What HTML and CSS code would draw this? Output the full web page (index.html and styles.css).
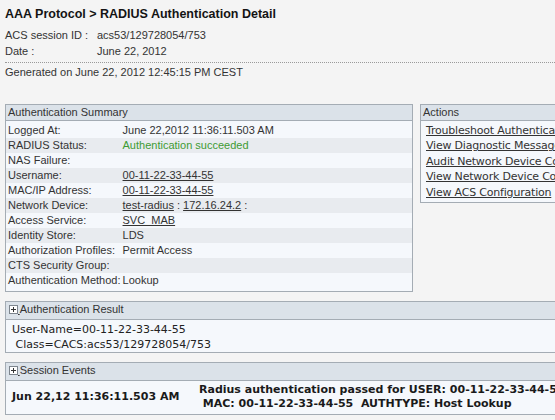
FILE: index.html
```html
<!DOCTYPE html>
<html lang="en">
<head>
    <meta charset="UTF-8" />
    <title>RADIUS Authentication Detail</title>
    <link rel="stylesheet" href="styles.css">
</head>
<body>
<div class="page">
    <h1 class="title">AAA Protocol &gt; RADIUS Authentication Detail</h1>
    <div class="meta">
        <div class="meta-row"><span class="meta-key">ACS session ID :</span><span>acs53/129728054/753</span></div>
        <div class="meta-row"><span class="meta-key">Date :</span><span>June 22, 2012</span></div>
    </div>
    <div class="generated">Generated on June 22, 2012 12:45:15 PM CEST</div>

    <div class="panels">
        <div class="box summary">
            <div class="box-head">Authentication Summary</div>
            <div class="box-body">
                <table class="summary-table">
                    <tr><td class="key">Logged At:</td><td>June 22,2012 11:36:11.503 AM</td></tr>
                    <tr><td class="key">RADIUS Status:</td><td class="ok">Authentication succeeded</td></tr>
                    <tr><td class="key">NAS Failure:</td><td></td></tr>
                    <tr><td class="key">Username:</td><td><a href="#">00-11-22-33-44-55</a></td></tr>
                    <tr><td class="key">MAC/IP Address:</td><td><a href="#">00-11-22-33-44-55</a></td></tr>
                    <tr><td class="key">Network Device:</td><td><a href="#">test-radius</a> : <a href="#">172.16.24.2</a> :</td></tr>
                    <tr><td class="key">Access Service:</td><td><a href="#">SVC_MAB</a></td></tr>
                    <tr><td class="key">Identity Store:</td><td>LDS</td></tr>
                    <tr><td class="key">Authorization Profiles:</td><td>Permit Access</td></tr>
                    <tr><td class="key">CTS Security Group:</td><td></td></tr>
                    <tr><td class="key">Authentication Method:</td><td>Lookup</td></tr>
                </table>
            </div>
        </div>

        <div class="box actions">
            <div class="box-head">Actions</div>
            <div class="box-body">
                <a href="#" class="action">Troubleshoot Authentication</a>
                <a href="#" class="action">View Diagnostic Messages</a>
                <a href="#" class="action">Audit Network Device Configuration</a>
                <a href="#" class="action">View Network Device Configuration</a>
                <a href="#" class="action">View ACS Configuration</a>
            </div>
        </div>
    </div>

    <div class="box wide">
        <div class="box-head">
            <svg class="toggle" width="9" height="9" viewBox="0 0 9 9"><rect x="0.5" y="0.5" width="8" height="8" fill="#fff" stroke="#7d858d"/><path d="M2 4.5h5M4.5 2v5" stroke="#333" stroke-width="1"/></svg><span class="gap">&nbsp;</span>Authentication Result
        </div>
        <div class="box-body result">
            <div class="line">User-Name=00-11-22-33-44-55</div>
            <div class="line"> Class=CACS:acs53/129728054/753</div>
        </div>
    </div>

    <div class="box wide">
        <div class="box-head">
            <svg class="toggle" width="9" height="9" viewBox="0 0 9 9"><rect x="0.5" y="0.5" width="8" height="8" fill="#fff" stroke="#7d858d"/><path d="M2 4.5h5M4.5 2v5" stroke="#333" stroke-width="1"/></svg><span class="gap">&nbsp;</span>Session Events
        </div>
        <div class="box-body events">
            <div class="event-time">Jun 22,12 11:36:11.503 AM</div>
            <div class="event-text">
                <div class="line">Radius authentication passed for USER: 00-11-22-33-44-55</div>
                <div class="line"> MAC: 00-11-22-33-44-55  AUTHTYPE: Host Lookup</div>
            </div>
        </div>
    </div>
</div>
</body>
</html>
```

FILE: styles.css
```css
html {
    overflow: hidden;
}

body {
    margin: 0;
    background-color: #f4f4f4;
    color: #222;
    font-family: 'Liberation Sans', Arial, sans-serif;
    font-size: 11px;
}

.page {
    width: 720px;
    padding: 7px 0 0 5px;
}

.title {
    margin: 0;
    font-size: 12.5px;
    line-height: 15px;
    font-weight: bold;
    color: #141414;
}

.meta {
    margin-top: 5px;
    font-size: 11px;
    line-height: 16px;
    color: #333;
}

.meta-row {
    display: flex;
}

.meta-key {
    width: 92px;
}

.generated {
    border-top: 1px dotted #9a9a9a;
    margin-top: 3px;
    padding-top: 1px;
    line-height: 16px;
    color: #333;
}

.panels {
    display: flex;
    align-items: flex-start;
    gap: 7px;
    margin-top: 24px;
}

.box {
    border: 1px solid #a4acb4;
    background-color: #f5f8fc;
}

.box-head {
    background-color: #dbe2e9;
    border-bottom: 1px solid #a4acb4;
    line-height: 15px;
    padding-left: 2px;
    color: #333;
}

.summary {
    width: 406px;
}

.summary .box-body {
    padding: 2px 0 3px;
}

.summary-table {
    border-collapse: collapse;
    width: 100%;
}

.summary-table td {
    padding: 0 0 0 2px;
    height: 15px;
    line-height: 15px;
    white-space: nowrap;
    color: #333;
}

.summary-table td.key {
    width: 112px;
}

.summary-table tr:nth-child(even) {
    background-color: #e8ebef;
}

.summary-table .ok {
    color: #3e9b34;
}

a {
    color: #333;
}

.actions {
    width: 240px;
}

.actions .box-body {
    padding: 2px 0 2px 5px;
    display: flex;
    flex-direction: column;
    font-family: 'DejaVu Sans', sans-serif;
    letter-spacing: -0.2px;
}

.action {
    line-height: 15.4px;
    white-space: nowrap;
}

.wide {
    margin-top: 9px;
}

.toggle {
    vertical-align: -1px;
    margin-left: 1px;
}

.gap {
    text-decoration: underline;
    font-size: 6px;
}

.line {
    white-space: pre;
}

.result {
    padding: 3px 0 0 6px;
    font-family: 'DejaVu Sans', sans-serif;
    line-height: 14.5px;
    color: #222;
}

.events {
    display: flex;
    align-items: center;
    padding: 2px 0 3px 6px;
    font-family: 'DejaVu Sans', sans-serif;
    font-weight: bold;
    line-height: 14px;
    color: #1a1a1a;
}

.event-time {
    width: 187px;
}
```
